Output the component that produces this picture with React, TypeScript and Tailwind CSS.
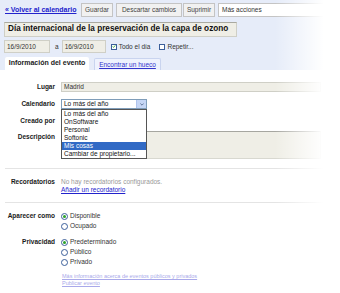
const Radio = ({ on }: { on?: boolean }) => (
  <span className="w-[7px] h-[7px] rounded-full border border-[#3b5f9a] bg-white flex items-center justify-center shrink-0">
    {on && <span className="w-[3px] h-[3px] rounded-full bg-[#2aa22a]"></span>}
  </span>
);

const Label = ({ children }: { children: React.ReactNode }) => (
  <div className="w-[55px] shrink-0 text-right font-bold text-[6.5px] text-[#1a1a1a] whitespace-nowrap">{children}</div>
);

const App = () => {
  const calendars = ["Lo más del año", "OnSoftware", "Personal", "Softonic", "Mis cosas", "Cambiar de propietario..."];

  return (
    <div className="relative w-[340px] h-[293px] overflow-hidden bg-white font-['Liberation_Sans',Arial,sans-serif] text-[#222] whitespace-nowrap">
      {/* Top bar */}
      <div className="h-[70px] bg-[#e6ecf9] pt-[3px]">
        <div className="flex items-center h-[14px]">
          <a className="ml-[5px] w-[76px] font-bold text-[7px] text-[#2222cc] underline">« Volver al calendario</a>
          <button className="w-[32px] h-[14px] border border-[#c4c4c4] bg-[#f1f1f1] text-[6.5px] text-[#444]">Guardar</button>
          <button className="ml-[3px] w-[66px] h-[14px] border border-[#c4c4c4] bg-[#f1f1f1] text-[6.5px] text-[#444]">Descartar cambios</button>
          <button className="ml-[1px] w-[32px] h-[14px] border border-[#c4c4c4] bg-[#f1f1f1] text-[6.5px] text-[#444]">Suprimir</button>
          <div className="ml-[3px] w-[112px] h-[14px] border border-[#c4c4c4] bg-white text-[6.5px] text-[#333] pl-[3px] flex items-center">Más acciones</div>
        </div>

        <div className="mt-[5px] ml-[4px] w-[233px] h-[15px] border border-[#cfcfc6] border-t-[#a9a9a0] bg-[#efeee6] flex items-center pl-[3px] font-bold text-[8.2px] text-[#111]">
          Día internacional de la preservación de la capa de ozono
        </div>

        <div className="mt-[3px] flex items-center h-[13px] text-[6.5px] text-[#333]">
          <div className="ml-[4px] w-[46px] h-[13px] border border-[#cfcfc6] bg-[#efeee6] flex items-center pl-[2px]">16/9/2010</div>
          <span className="ml-[5px]">a</span>
          <div className="ml-[3px] w-[44px] h-[13px] border border-[#cfcfc6] bg-[#efeee6] flex items-center pl-[2px]">16/9/2010</div>
          <span className="ml-[5px] w-[6px] h-[6px] border border-[#3b5f9a] bg-white flex items-center justify-center">
            <svg viewBox="0 0 6 6" className="w-[5px] h-[5px]"><path d="M1 3l1.3 1.4L5 1.2" fill="none" stroke="#21a121" strokeWidth="1.2" /></svg>
          </span>
          <span className="ml-[2px]">Todo el día</span>
          <span className="ml-[9px] w-[6px] h-[6px] border border-[#3b5f9a] bg-white"></span>
          <span className="ml-[2px]">Repetir...</span>
        </div>

        <div className="mt-[4px] flex items-end h-[13px]">
          <div className="ml-[5px] w-[84px] h-[13px] bg-white rounded-t-[2px] flex items-center justify-center font-bold text-[7px] text-[#222]">
            Información del evento
          </div>
          <div className="ml-[5px] w-[67px] h-[12px] bg-[#eef2fd] border border-b-0 border-[#c9d4ef] rounded-t-[2px] flex items-center justify-center text-[6.5px] text-[#3333cc] underline">
            Encontrar un hueco
          </div>
        </div>
      </div>

      {/* Body */}
      <div className="pt-[12px]">
        <div className="flex items-center gap-[6px] h-[10px]">
          <Label>Lugar</Label>
          <div className="w-[260px] h-[10px] border border-[#cfcfc6] bg-[#efeee6] flex items-center pl-[2px] text-[6.5px] text-[#333]">Madrid</div>
        </div>

        <div className="mt-[7px] flex items-center gap-[6px] h-[10px]">
          <Label>Calendario</Label>
          <div className="relative w-[86px] h-[10px] border border-[#7f9db9] bg-white flex items-center text-[6.5px] text-[#111]">
            <span className="pl-[2px] flex-1">Lo más del año</span>
            <span className="w-[10px] h-full bg-[#c6d6f5] border-l border-[#b0c4ec] flex items-center justify-center">
              <svg viewBox="0 0 6 4" className="w-[4px] h-[3px]"><path d="M0.5 0.5L3 3l2.5-2.5" fill="none" stroke="#4d6185" strokeWidth="1.2" /></svg>
            </span>
            {/* open dropdown list */}
            <div className="absolute left-[-1px] top-[9px] w-[86px] border border-[#555] bg-white z-10">
              {calendars.map((c) => (
                <div
                  key={c}
                  className={`h-[8px] leading-[8px] pl-[2px] text-[6.5px] ${c === "Mis cosas" ? "bg-[#316ac5] text-white" : "text-[#111]"}`}
                >
                  {c}
                </div>
              ))}
            </div>
          </div>
        </div>

        <div className="mt-[7px] flex items-center gap-[6px] h-[10px]">
          <Label>Creado por</Label>
        </div>

        <div className="mt-[5px] flex items-start gap-[6px]">
          <div className="pt-[1px]"><Label>Descripción</Label></div>
          <div className="w-[260px] h-[28px] border border-[#d8d8d0] border-t-[#a6a6a0] bg-[#efeee6]"></div>
        </div>

        <div className="mt-[9px] ml-[5px] w-[320px] h-px bg-[#e4e4e4]"></div>

        <div className="mt-[9px] flex items-start gap-[6px]">
          <div className="leading-[7.5px]"><Label>Recordatorios</Label></div>
          <div className="text-[6.5px] leading-[7.5px]">
            <div className="text-[#999]">No hay recordatorios configurados.</div>
            <a className="text-[#2222cc] underline">Añadir un recordatorio</a>
          </div>
        </div>

        <div className="mt-[9px] ml-[5px] w-[320px] h-px bg-[#e4e4e4]"></div>

        <div className="mt-[8px] flex items-start gap-[6px]">
          <div className="leading-[10px]"><Label>Aparecer como</Label></div>
          <div className="text-[6.5px] text-[#333] leading-[10px]">
            <div className="flex items-center gap-[2px] h-[10px]"><Radio on />Disponible</div>
            <div className="flex items-center gap-[2px] h-[10px]"><Radio />Ocupado</div>
          </div>
        </div>

        <div className="mt-[6px] flex items-start gap-[6px]">
          <div className="leading-[10px]"><Label>Privacidad</Label></div>
          <div className="text-[6.5px] text-[#333] leading-[10px]">
            <div className="flex items-center gap-[2px] h-[10px]"><Radio on />Predeterminado</div>
            <div className="flex items-center gap-[2px] h-[10px]"><Radio />Público</div>
            <div className="flex items-center gap-[2px] h-[10px]"><Radio />Privado</div>
          </div>
        </div>

        <div className="mt-[6px] ml-[62px] text-[5.5px] leading-[7px] text-[#a9a9ea]">
          <div className="underline">Más información acerca de eventos públicos y privados</div>
          <div className="underline">Publicar evento</div>
        </div>
      </div>

      {/* right edge fade */}
      <div className="absolute top-0 right-0 w-[65px] h-full bg-[linear-gradient(to_right,rgba(255,255,255,0),#fff_75%)] pointer-events-none z-20"></div>
    </div>
  );
};

export default App;
